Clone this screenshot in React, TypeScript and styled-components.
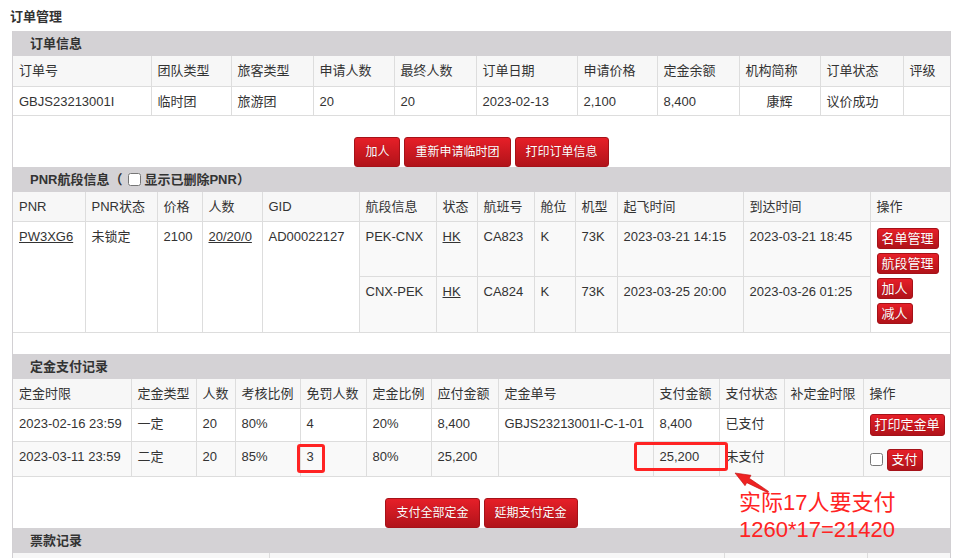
import React from 'react'
import styled, { createGlobalStyle } from 'styled-components'

const GlobalStyle = createGlobalStyle`
	html, body {
		margin: 0;
		padding: 0;
		background: #fff;
	}
	body {
		font-family: 'Liberation Sans', 'Noto Sans CJK SC', sans-serif;
		font-size: 13px;
		color: #333;
	}
`

const Page = styled.div`
	position: relative;
	width: 958px;
	height: 558px;
	overflow: hidden;
	padding: 0 0 0 10px;
	box-sizing: border-box;
`

const PageTitle = styled.div`
	font-weight: bold;
	font-size: 13px;
	line-height: 17px;
	padding-top: 8px;
	height: 23px;
	box-sizing: border-box;
	margin-bottom: 8px;
`

const Panel = styled.div`
	margin-left: 2px;
	width: 939px;
	box-sizing: border-box;
	border-left: 1px solid #d2d0d3;
	border-right: 1px solid #d2d0d3;
`

const SectionHeader = styled.div`
	height: 25px;
	line-height: 25px;
	background: #d4d2d5;
	padding-left: 17px;
	font-weight: bold;
	font-size: 13px;
	display: flex;
	align-items: center;
	color: #333;

	input {
		margin: 0 3px 0 6px;
		width: 13px;
		height: 13px;
	}
`

const Table = styled.table`
	width: 100%;
	table-layout: fixed;
	border-collapse: collapse;

	th,
	td {
		border: 1px solid #dddddd;
		padding: 6px 6px 5px;
		line-height: 17px;
		text-align: left;
		vertical-align: top;
		font-weight: normal;
		white-space: nowrap;
		overflow: hidden;
	}

	tr > :first-child {
		border-left: none;
	}
	tr > :last-child {
		border-right: none;
	}

	thead th {
		background: #f7f7f7;
		border-top: none;
	}
`

const Row = styled.tr<{ $h: number; $shade?: boolean }>`
	height: ${(p) => p.$h}px;
	td {
		background: ${(p) => (p.$shade ? '#f9f9f9' : '#fff')};
	}
`

const Cell = styled.td<{ $center?: boolean; $shade?: boolean }>`
	&& {
		text-align: ${(p) => (p.$center ? 'center' : 'left')};
		background: ${(p) => (p.$shade ? '#f9f9f9' : '#fff')};
	}
`

const Link = styled.a`
	color: #333;
	text-decoration: underline;
	cursor: pointer;
`

const ButtonBar = styled.div`
	padding-top: 21px;
	display: flex;
	justify-content: center;
	gap: 4px;
`

const Spacer = styled.div`
	height: 21px;
`

const RedButton = styled.button<{ $small?: boolean }>`
	font-family: 'Liberation Sans', 'Noto Sans CJK SC', sans-serif;
	font-size: ${(p) => (p.$small ? 13 : 12)}px;
	height: ${(p) => (p.$small ? 21 : 30)}px;
	padding: ${(p) => (p.$small ? '0 4px' : '0 10px')};
	line-height: 1;
	color: #fff;
	text-shadow: 0 0 1px rgba(120, 0, 0, 0.5);
	border: 1px solid #a51219;
	border-radius: 3px;
	background: linear-gradient(#e61f28, #b1131a);
	cursor: pointer;
	white-space: nowrap;
`

const ActionStack = styled.div`
	display: flex;
	flex-direction: column;
	align-items: flex-start;
	gap: 4px;
`

const PayCell = styled.div`
	display: flex;
	align-items: center;
	gap: 4px;
	padding-top: 1px;

	input {
		margin: 0;
		width: 13px;
		height: 13px;
	}
`

const MarkBox = styled.div`
	position: absolute;
	border: 3px solid #ff2323;
	border-radius: 3px;
	box-sizing: border-box;
`

const Arrow = styled.svg`
	position: absolute;
	left: 730px;
	top: 468px;
`

const Note = styled.div`
	position: absolute;
	left: 739px;
	top: 489px;
	color: #ff2323;
	font-family: 'Liberation Sans', 'Noto Sans CJK SC', sans-serif;
	font-size: 22px;
	line-height: 27px;
	white-space: nowrap;
`

const orderCols = [138, 80, 82, 81, 82, 101, 80, 82, 81, 83, 47]
const pnrCols = [72, 72, 45, 60, 97, 77, 41, 57, 41, 42, 126, 127, 80]
const payCols = [118, 65, 39, 65, 66, 65, 67, 155, 66, 65, 79, 87]
const ticketCols = [256, 455, 143, 83]

const Cols = ({ widths }: { widths: number[] }) => (
	<colgroup>
		{widths.map((w, i) => (
			<col key={i} style={{ width: w }} />
		))}
	</colgroup>
)

const Head = ({ labels, h = 30 }: { labels: string[]; h?: number }) => (
	<thead>
		<Row $h={h}>
			{labels.map((l, i) => (
				<th key={i}>{l}</th>
			))}
		</Row>
	</thead>
)

const App = () => {
	return (
		<>
			<GlobalStyle />
			<Page>
				<PageTitle>订单管理</PageTitle>
				<Panel>
					<SectionHeader>订单信息</SectionHeader>
					<Table>
						<Cols widths={orderCols} />
						<Head
							labels={[
								'订单号',
								'团队类型',
								'旅客类型',
								'申请人数',
								'最终人数',
								'订单日期',
								'申请价格',
								'定金余额',
								'机构简称',
								'订单状态',
								'评级',
							]}
						/>
						<tbody>
							<Row $h={29}>
								<td>GBJS23213001I</td>
								<td>临时团</td>
								<td>旅游团</td>
								<td>20</td>
								<td>20</td>
								<td>2023-02-13</td>
								<td>2,100</td>
								<td>8,400</td>
								<Cell $center>康辉</Cell>
								<td>议价成功</td>
								<td></td>
							</Row>
						</tbody>
					</Table>
					<ButtonBar>
						<RedButton>加人</RedButton>
						<RedButton>重新申请临时团</RedButton>
						<RedButton>打印订单信息</RedButton>
					</ButtonBar>

					<SectionHeader>
						PNR航段信息（<input type='checkbox' />显示已删除PNR）
					</SectionHeader>
					<Table>
						<Cols widths={pnrCols} />
						<Head
							labels={[
								'PNR',
								'PNR状态',
								'价格',
								'人数',
								'GID',
								'航段信息',
								'状态',
								'航班号',
								'舱位',
								'机型',
								'起飞时间',
								'到达时间',
								'操作',
							]}
						/>
						<tbody>
							<Row $h={55} $shade>
								<Cell rowSpan={2}>
									<Link>PW3XG6</Link>
								</Cell>
								<Cell rowSpan={2}>未锁定</Cell>
								<Cell rowSpan={2}>2100</Cell>
								<Cell rowSpan={2}>
									<Link>20/20/0</Link>
								</Cell>
								<Cell rowSpan={2}>AD00022127</Cell>
								<td>PEK-CNX</td>
								<td>
									<Link>HK</Link>
								</td>
								<td>CA823</td>
								<td>K</td>
								<td>73K</td>
								<td>2023-03-21 14:15</td>
								<td>2023-03-21 18:45</td>
								<Cell rowSpan={2}>
									<ActionStack>
										<RedButton $small>名单管理</RedButton>
										<RedButton $small>航段管理</RedButton>
										<RedButton $small>加人</RedButton>
										<RedButton $small>减人</RedButton>
									</ActionStack>
								</Cell>
							</Row>
							<Row $h={56} $shade>
								<td>CNX-PEK</td>
								<td>
									<Link>HK</Link>
								</td>
								<td>CA824</td>
								<td>K</td>
								<td>73K</td>
								<td>2023-03-25 20:00</td>
								<td>2023-03-26 01:25</td>
							</Row>
						</tbody>
					</Table>
					<Spacer />

					<SectionHeader>定金支付记录</SectionHeader>
					<Table>
						<Cols widths={payCols} />
						<Head
							h={29}
							labels={[
								'定金时限',
								'定金类型',
								'人数',
								'考核比例',
								'免罚人数',
								'定金比例',
								'应付金额',
								'定金单号',
								'支付金额',
								'支付状态',
								'补定金时限',
								'操作',
							]}
						/>
						<tbody>
							<Row $h={33}>
								<td>2023-02-16 23:59</td>
								<td>一定</td>
								<td>20</td>
								<td>80%</td>
								<td>4</td>
								<td>20%</td>
								<td>8,400</td>
								<td>GBJS23213001I-C-1-01</td>
								<td>8,400</td>
								<td>已支付</td>
								<td></td>
								<Cell style={{ paddingTop: 5 }}>
									<RedButton $small style={{ height: 22 }}>
										打印定金单
									</RedButton>
								</Cell>
							</Row>
							<Row $h={35} $shade>
								<td>2023-03-11 23:59</td>
								<td>二定</td>
								<td>20</td>
								<td>85%</td>
								<td>3</td>
								<td>80%</td>
								<td>25,200</td>
								<td></td>
								<td>25,200</td>
								<td>未支付</td>
								<td></td>
								<Cell $shade>
									<PayCell>
										<input type='checkbox' />
										<RedButton $small style={{ height: 22 }}>
											支付
										</RedButton>
									</PayCell>
								</Cell>
							</Row>
						</tbody>
					</Table>
					<ButtonBar>
						<RedButton>支付全部定金</RedButton>
						<RedButton>延期支付定金</RedButton>
					</ButtonBar>

					<SectionHeader>票款记录</SectionHeader>
					<Table>
						<Cols widths={ticketCols} />
						<Head labels={['', '', '', '']} />
					</Table>
				</Panel>

				<MarkBox style={{ left: 297, top: 444, width: 28, height: 29 }} />
				<MarkBox style={{ left: 634, top: 442, width: 94, height: 29 }} />
				<Arrow width='45' height='30' viewBox='0 0 45 30'>
					<polygon
						points='5,5 21,7.3 19.3,10.3 38.6,23.4 37.6,24.6 16.8,14.7 15,17.7'
						fill='#ee2222'
						stroke='#c01010'
						strokeWidth='0.6'
						strokeLinejoin='round'
					/>
				</Arrow>
				<Note>
					实际17人要支付
					<br />
					1260*17=21420
				</Note>
			</Page>
		</>
	)
}

export default App
